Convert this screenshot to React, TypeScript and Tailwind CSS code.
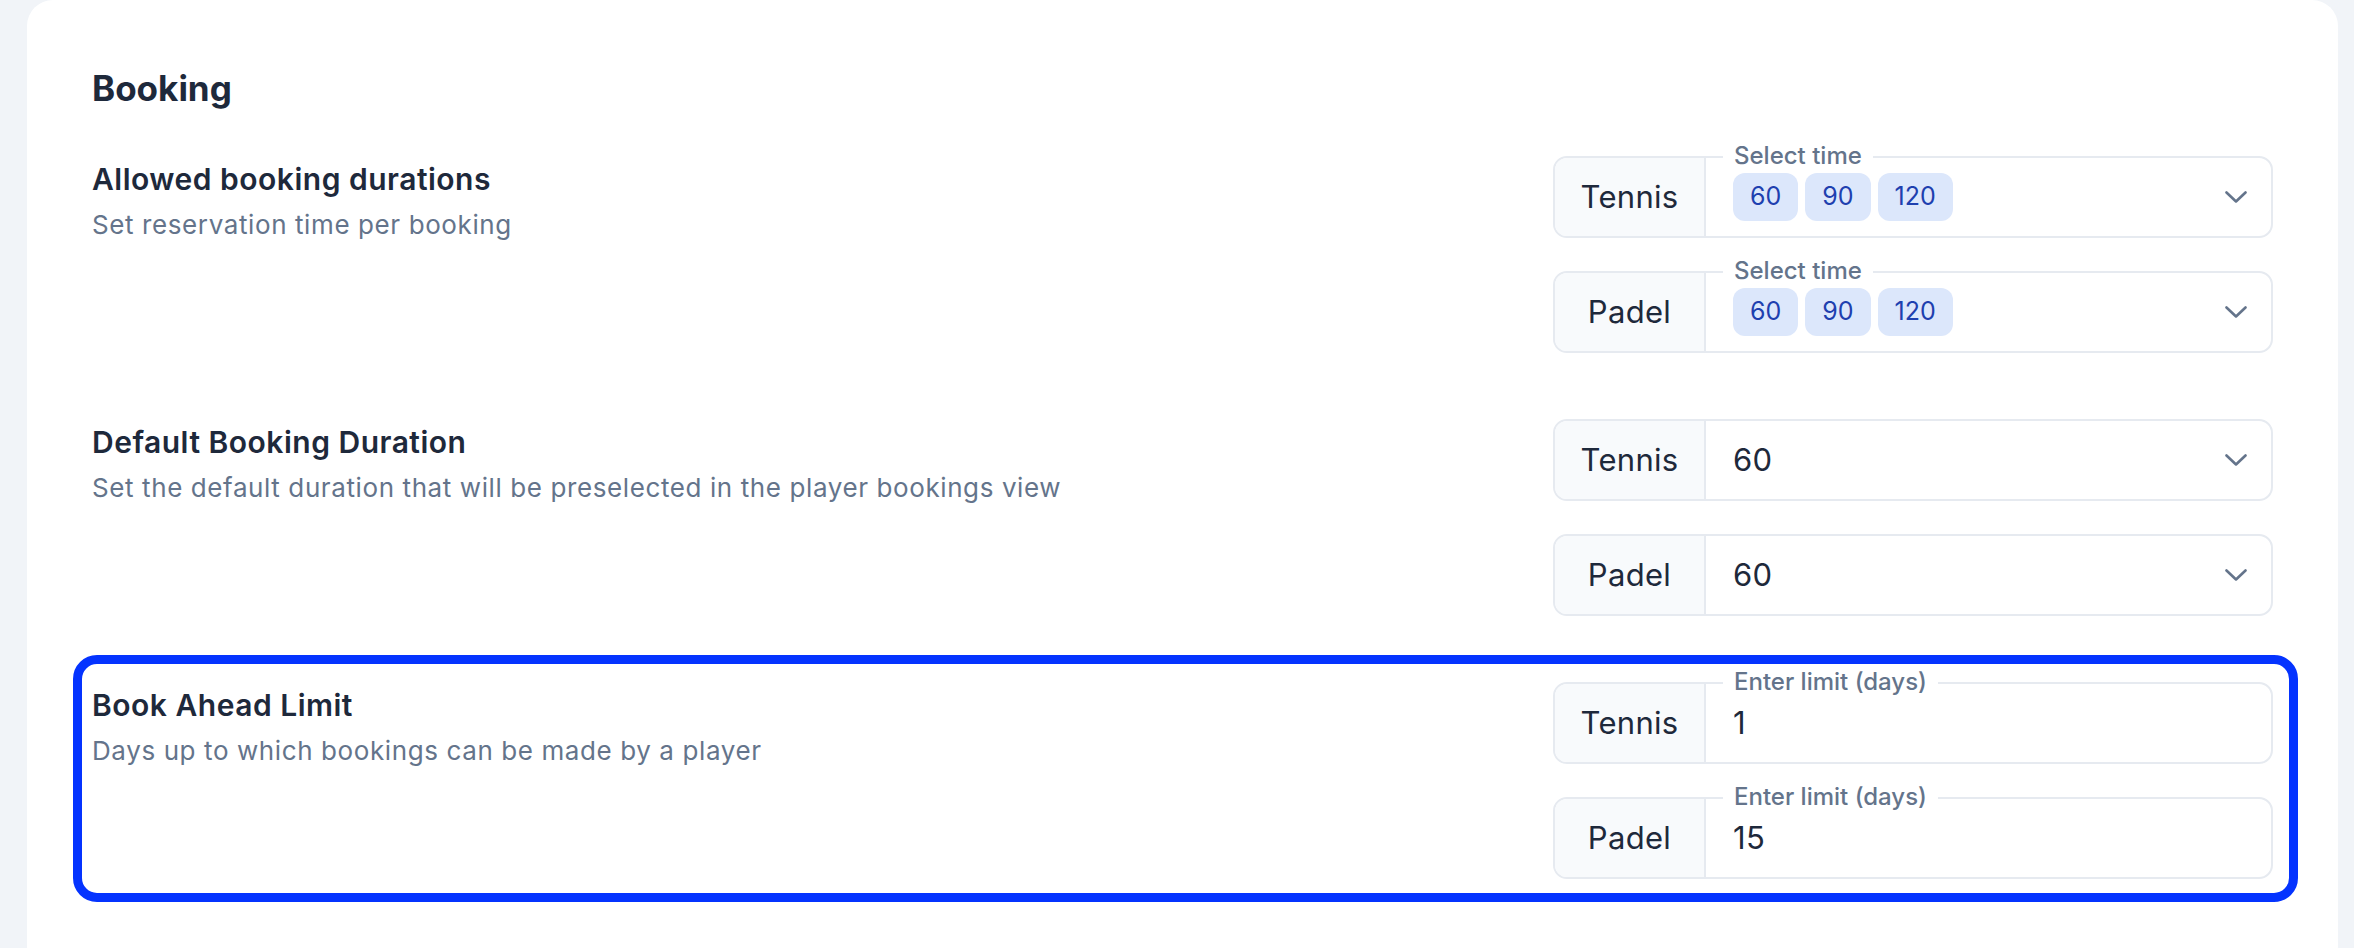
import React from "react";

const FONT = { fontFamily: "Inter, 'Noto Sans', sans-serif" };

function Chevron() {
  return (
    <svg width="22" height="12" viewBox="0 0 22 12" fill="none" className="shrink-0">
      <polyline points="1.5,1.5 11,10.5 20.5,1.5" stroke="#64748b" strokeWidth="2.6" strokeLinecap="round" strokeLinejoin="round" />
    </svg>
  );
}

function Control({
  sport,
  floating,
  children,
  chevron,
}: {
  sport: string;
  floating?: string;
  children: React.ReactNode;
  chevron?: boolean;
}) {
  return (
    <div className="relative flex h-[82px] w-full rounded-[14px] border-2 border-[#e6eaf0] bg-white">
      <div className="flex w-[151px] shrink-0 items-center justify-center rounded-l-[12px] border-r-2 border-[#e6eaf0] bg-[#f8fafc] text-[31px] tracking-[0.3px] text-[#1e293b]">
        {sport}
      </div>
      <div className="flex flex-1 items-center pl-[27px] pr-[24px]">
        <div className="flex flex-1 items-center gap-[7px]">{children}</div>
        {chevron && <Chevron />}
      </div>
      {floating && (
        <div className="absolute -top-[16px] left-[168px] bg-white px-[11px] text-[24px] font-medium leading-[28px] text-[#64748b]">
          {floating}
        </div>
      )}
    </div>
  );
}

function Chip({ v }: { v: string }) {
  return (
    <div className="flex h-[48px] items-center rounded-[12px] bg-[#dce7fb] px-[17px] text-[25px] text-[#1e40af]">
      {v}
    </div>
  );
}

function Value({ v }: { v: string }) {
  return <span className="text-[31px] tracking-[0.3px] text-[#1e293b]">{v}</span>;
}

function Row({
  title,
  subtitle,
  children,
}: {
  title: string;
  subtitle: string;
  children: React.ReactNode;
}) {
  return (
    <div className="flex items-start">
      <div className="flex-1 pt-[5px]">
        <div className="text-[30px] font-semibold leading-[36px] tracking-[0.5px] text-[#1e293b]">{title}</div>
        <div className="mt-[10px] text-[26px] leading-[36px] tracking-[0.6px] text-[#64748b]">{subtitle}</div>
      </div>
      <div className="flex w-[720px] flex-col gap-[33px]">{children}</div>
    </div>
  );
}

export default function App() {
  return (
    <div className="h-[948px] w-full overflow-hidden bg-[#f1f4f8] pl-[27px] pr-[16px]" style={FONT}>
      <div className="h-[1000px] rounded-t-[26px] bg-white px-[65px] pt-[66px]">
        <div className="text-[35px] font-bold leading-[44px] text-[#1e293b]">Booking</div>
        <div className="mt-[46px] flex flex-col gap-[66px]">
          <Row title="Allowed booking durations" subtitle="Set reservation time per booking">
            <Control sport="Tennis" floating="Select time" chevron>
              <Chip v="60" />
              <Chip v="90" />
              <Chip v="120" />
            </Control>
            <Control sport="Padel" floating="Select time" chevron>
              <Chip v="60" />
              <Chip v="90" />
              <Chip v="120" />
            </Control>
          </Row>
          <Row
            title="Default Booking Duration"
            subtitle="Set the default duration that will be preselected in the player bookings view"
          >
            <Control sport="Tennis" chevron>
              <Value v="60" />
            </Control>
            <Control sport="Padel" chevron>
              <Value v="60" />
            </Control>
          </Row>
          <div className="relative">
            <div className="pointer-events-none absolute -top-[27px] -left-[19px] -right-[25px] -bottom-[23px] rounded-[24px] border-[9px] border-[#0433ff]" />
            <Row title="Book Ahead Limit" subtitle="Days up to which bookings can be made by a player">
              <Control sport="Tennis" floating="Enter limit (days)">
                <Value v="1" />
              </Control>
              <Control sport="Padel" floating="Enter limit (days)">
                <Value v="15" />
              </Control>
            </Row>
          </div>
        </div>
      </div>
    </div>
  );
}
